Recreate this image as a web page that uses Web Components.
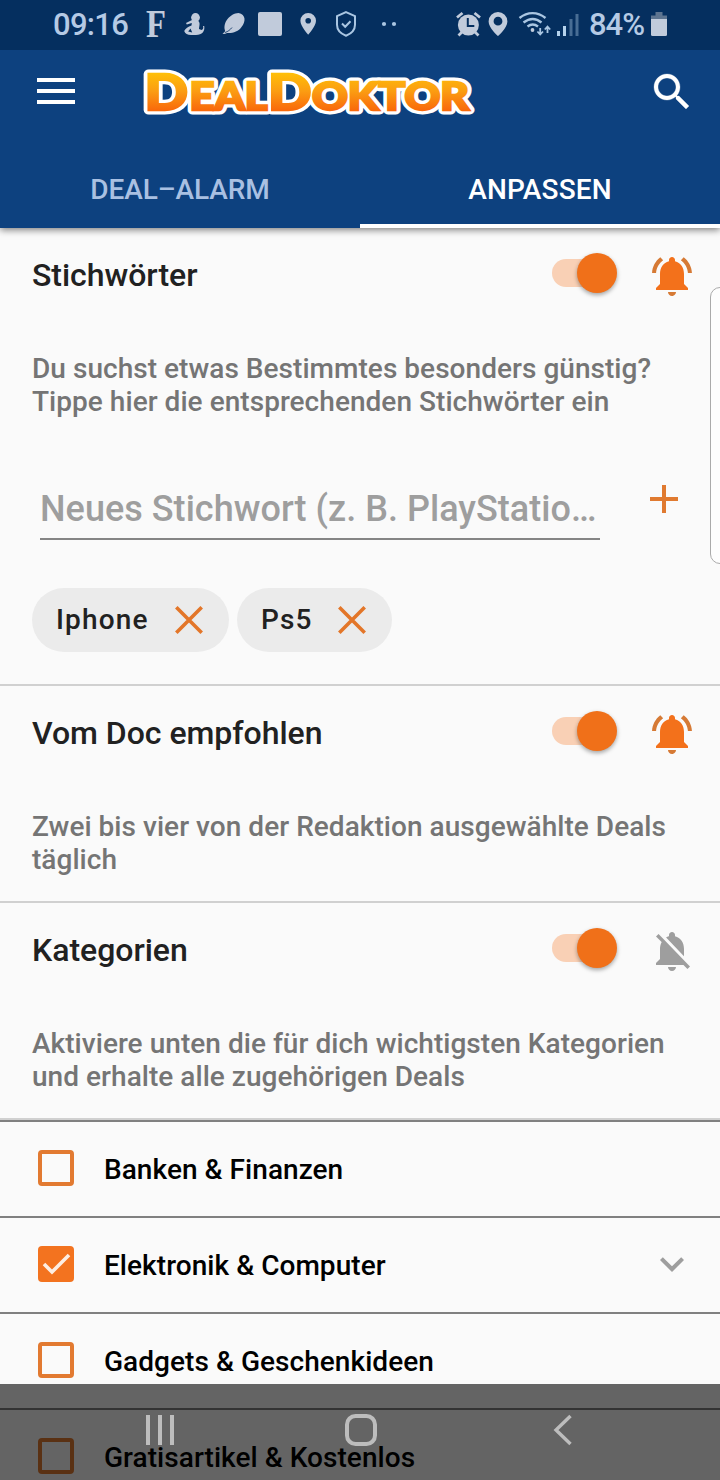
<!DOCTYPE html>
<html lang="de">
<head>
<meta charset="utf-8">
<title>DealDoktor – Anpassen</title>
<style>
html,body{margin:0;padding:0;background:#fafafa}
body{width:720px;height:1480px;overflow:hidden;font-family:Roboto,"Liberation Sans",sans-serif;font-weight:500}
</style>
</head>
<body>
<deal-app></deal-app>
<script>
const define = (name, html) => customElements.define(name, class extends HTMLElement {
  constructor() {
    super();
    const t = document.createElement('template');
    t.innerHTML = html;
    this.attachShadow({mode: 'open'}).append(t.content.cloneNode(true));
  }
});

define('status-bar', `
<style>
:host{display:grid;height:50px;background:#052f5f;color:#b5cae5;align-items:center;
grid-template-columns:53px 89px 30px 40px 40px 38px 36px 40px 74px 46px 27px 41px 33px 60px 73px}
svg{display:block;width:100%;height:50px;fill:#c1cbdb;overflow:visible}
span{font-size:31px;line-height:50px;white-space:nowrap;font-weight:500}
.t{letter-spacing:-.7px}.p{letter-spacing:-1px;padding-left:2px}
</style>
<i></i><span class="t">09:16</span>
<svg viewBox="142 0 30 50"><text x="146" y="37" font-family="Liberation Serif,serif" font-weight="700" font-size="39" textLength="20" lengthAdjust="spacingAndGlyphs">F</text></svg>
<svg viewBox="172 0 40 50"><circle cx="195.500" cy="17.500" r="4.400"/><path d="M192 20c4-1 7 0 7.500 3 .3 2-.5 4-.5 6l2.500 1c1.500-.5 2.200-2 1.500-4h1.200c1 5-2 9-8.200 9h-5c-3.500 0-6-1.500-6.800-4 1.300-2.500 3.800-4.500 7.300-5.500l.3-2.500-5 1.500-.8-1.500 4-2z"/><path d="M190.500 28.500l-2.300 3 4 1z" fill="#052f5f"/></svg>
<svg viewBox="212 0 40 50"><path d="M222.500 33.500c1.800-1 2.500-1.500 2.500-3-2.500-8 5-17 13.500-17.500 7.500 1.500 7.500 8.500 3 14-3 4.500-9 6.500-14.500 6-2 1-3.500 1.200-4.500.5z"/><path d="M225 32.500c3-1 5-2.500 7-5" fill="none" stroke="#052f5f" stroke-width=".8"/></svg>
<svg viewBox="252 0 38 50"><rect x="258" y="12" width="24" height="24" rx="2"/></svg>
<svg viewBox="290 0 36 50"><path fill-rule="evenodd" d="M308.200 13a7.800 7.800 0 0 1 7.800 7.800c0 5.500-7.800 14-7.800 14s-7.800-8.500-7.800-14a7.800 7.800 0 0 1 7.800-7.800zm0 5a2.800 2.800 0 1 0 0 5.600 2.800 2.800 0 0 0 0-5.600z"/></svg>
<svg viewBox="326 0 40 50"><path d="M346 12.200l9 4v8.500c0 5-4 9-9 11-5-2-9-6-9-11v-8.500z" fill="none" stroke="#aac6e2" stroke-width="2"/><path d="M342 23.500l3.200 3.200 5.300-5.500" fill="none" stroke="#aac6e2" stroke-width="2"/></svg>
<svg viewBox="366 0 74 50" style="fill:#aac6e2"><circle cx="384" cy="24" r="2.100"/><circle cx="394" cy="24" r="2.100"/></svg>
<svg viewBox="440 0 46 50"><circle cx="468.400" cy="25" r="10.500"/><path d="M457 17.500l5.500-4.500M480 17.500l-5.500-4.500M462 32l-3.500 3.500M475 32l3.500 3.500" stroke="#c1cbdb" stroke-width="2.800"/><path d="M467.800 18v8h6.500" fill="none" stroke="#052f5f" stroke-width="2"/></svg>
<svg viewBox="486 0 27 50"><path fill-rule="evenodd" d="M498 12a9.400 9.400 0 0 1 9.400 9.400c0 6.500-9.400 14.600-9.400 14.600s-9.400-8.100-9.400-14.600A9.400 9.400 0 0 1 498 12zm0 4.800a4.400 4.400 0 1 0 0 8.800 4.400 4.400 0 0 0 0-8.800z"/></svg>
<svg viewBox="513 0 41 50"><g fill="none" stroke="#aac6e2" stroke-width="2.400"><path d="M519.500 18c8-6.500 18-6.500 26 0M523.500 22.500c6-4.500 12.500-4.500 18 0M527.500 26.500c3.500-2.600 7-2.600 10.500 0"/></g><circle cx="532.500" cy="30" r="1.900"/><path d="M540.200 28v6M537.400 31.500l2.800 3 2.800-3M547.500 33v-6M544.800 29.500l2.700-3 2.700 3" fill="none" stroke="#aac6e2" stroke-width="1.800"/></svg>
<svg viewBox="554 0 33 50"><path d="M557 31h3v5h-3zM563 26h3v10h-3z" fill="#b5d2ec"/><path d="M569.500 19h3v17h-3zM575.500 14h3v22h-3z" fill="#486d94"/></svg>
<span class="p">84%</span>
<svg viewBox="647 0 73 50"><path d="M651 19v-3.500h4.500V12h7v3.500h4.500V19z" fill="#5d7490"/><path d="M651 19h16v15.500q0 1.500-1.500 1.500h-13q-1.500 0-1.500-1.500z"/></svg>`);

define('brand-logo', `
<style>:host{display:block;width:340px;height:60px}svg{display:block;overflow:visible}
text{font-family:Lato,sans-serif;font-weight:900}
.o{stroke:#fff;stroke-width:9;stroke-linejoin:round;fill:#fff}.f{fill:url(#g);stroke:url(#g);stroke-width:2.400}
</style>
<svg width="340" height="60" viewBox="140 60 340 60">
<defs><linearGradient id="g" gradientUnits="userSpaceOnUse" x1="0" y1="72" x2="0" y2="110"><stop offset="0" stop-color="#ffc107"/><stop offset=".5" stop-color="#fb9d12"/><stop offset="1" stop-color="#f96a0b"/></linearGradient>
<g id="w"><text x="144.500" y="110" font-size="50" textLength="43.500" lengthAdjust="spacingAndGlyphs">D</text><text x="189.500" y="110" font-size="38" textLength="78" lengthAdjust="spacingAndGlyphs">EAL</text><text x="268" y="110" font-size="50" textLength="43.500" lengthAdjust="spacingAndGlyphs">D</text><text x="312" y="110" font-size="38" textLength="157" lengthAdjust="spacingAndGlyphs">OKTOR</text></g></defs>
<use href="#w" class="o"/><use href="#w" class="f"/></svg>`);

define('app-bar', `
<style>:host{display:grid;grid-template-columns:37px 103px 1fr 72px;height:100px;background:#0d417f}
svg{display:block}.m{margin-top:28px}.s{margin-top:18px}brand-logo{margin-top:10px}</style>
<i></i><svg class="m" width="38" height="26" viewBox="0 0 38 26" fill="#fff"><path d="M0 0h38v4H0zM0 11h38v4H0zM0 22h38v4H0z"/></svg>
<brand-logo></brand-logo>
<svg class="s" width="48" height="48" viewBox="0 0 24 24" fill="#fff" stroke="#fff" stroke-width=".15"><path d="M15.500 14h-.79l-.28-.27C15.410 12.590 16 11.110 16 9.500 16 5.910 13.090 3 9.500 3S3 5.910 3 9.500 5.910 16 9.500 16c1.610 0 3.090-.59 4.230-1.570l.27.28v.79l5 4.990L20.490 19l-4.990-5zm-6 0C7.010 14 5 11.990 5 9.500S7.010 5 9.500 5 14 7.010 14 9.500 11.990 14 9.500 14z"/></svg>`);

define('tab-strip', `
<style>:host{display:grid;grid-template-columns:1fr 1fr;height:78px;background:#0d417f;position:relative;z-index:1;box-shadow:0 2px 7px rgba(0,0,0,.5);clip-path:inset(0 0 -14px 0);color:#a9c0e2}
div{box-sizing:border-box;text-align:center;font-size:28px;line-height:79px;height:78px;letter-spacing:-.1px}
.on{color:#fff;border-bottom:4px solid #fff;letter-spacing:.15px}</style>
<div>DEAL–ALARM</div><div class="on">ANPASSEN</div>`);

define('toggle-switch', `
<style>:host{display:flex;align-items:center;width:65px;height:40px}
i{width:56px;height:28px;border-radius:14px;background:#f9d0b5}
b{width:40px;height:40px;border-radius:50%;background:#f07019;margin-left:-31px;box-shadow:0 2px 4px rgba(0,0,0,.35)}</style><i></i><b></b>`);

define('bell-on', `<style>:host{display:block}svg{display:block}</style><svg width="48" height="48" viewBox="0 0 24 24" fill="#d67a35"><path d="M7.580 4.080L6.150 2.650C3.750 4.480 2.170 7.300 2.030 10.500h2c.15-2.650 1.510-4.970 3.550-6.420zm12.390 6.420h2c-.15-3.200-1.730-6.020-4.120-7.850l-1.420 1.430c2.020 1.450 3.390 3.770 3.540 6.420zM12 22c.14 0 .27-.01.4-.04.65-.14 1.180-.58 1.440-1.180.1-.24.15-.5.15-.78h-4c.01 1.100.9 2 2.010 2z"/><path fill="#f3711b" d="M18 11c0-3.070-1.640-5.640-4.500-6.320V4c0-.83-.67-1.500-1.500-1.500s-1.500.67-1.500 1.500v.68C7.630 5.360 6 7.920 6 11v5l-2 2v1h16v-1l-2-2v-5z"/></svg>`);
define('bell-off', `<style>:host{display:block}svg{display:block}</style><svg width="48" height="48" viewBox="0 0 24 24" fill="#9e9e9e"><path d="M20 18.690L7.840 6.140 5.270 3.490 4 4.760l2.800 2.800v.01c-.52.99-.8 2.160-.8 3.420v5l-2 2v1h13.730l2 2L21 19.720l-1-1.030zM12 22c1.110 0 2-.89 2-2h-4c0 1.110.89 2 2 2zm6-7.320V11c0-3.080-1.640-5.640-4.500-6.320V4c0-.83-.67-1.500-1.500-1.500s-1.500.67-1.500 1.500v.68c-.15.03-.29.08-.42.12-.1.03-.2.07-.3.110h-.01c-.01 0-.01 0-.02.01-.23.09-.46.2-.68.31 0 0-.01 0-.01.01L18 14.680z"/></svg>`);

define('settings-section', `
<style>:host{display:block;box-sizing:border-box;border-bottom:2px solid #d0d0d0;padding-bottom:25px}
header{display:grid;grid-template-columns:1fr 65px 48px;column-gap:31px;padding:0 24px 0 32px;height:124px;align-items:start}
h2{margin:0;font-size:32px;line-height:40px;padding-top:27px;font-weight:500;letter-spacing:-.03px;color:#212121}
toggle-switch{margin-top:25px}slot[name=bell]{display:block;margin-top:24px}
.d{display:block;padding-left:32px;font-size:28px;line-height:33px;letter-spacing:.04px;color:#757575;white-space:nowrap}</style>
<header><h2><slot name="title"></slot></h2><toggle-switch></toggle-switch><slot name="bell"></slot></header>
<div class="d"><slot name="desc"></slot></div><slot></slot>`);

define('keyword-field', `
<style>:host{display:grid;grid-template-columns:560px 48px;column-gap:48px;padding:58px 0 0 40px;align-items:start}
div{height:64px;box-sizing:border-box;border-bottom:2px solid #858585;font-size:36px;letter-spacing:.03px;line-height:66px;color:#9e9e9e;white-space:nowrap}
svg{display:block;width:28px;height:28px;margin:9px 0 0 2px}</style>
<div>Neues Stichwort (z. B. PlayStatio…</div>
<svg viewBox="0 0 28 28" fill="#e07a30"><path d="M12 0h4v12h12v4H16v12h-4V16H0v-4h12z"/></svg>`);

define('keyword-chip', `
<style>:host{display:flex;box-sizing:border-box;height:64px;border-radius:32px;background:#ebebeb;align-items:center;padding:0 26px 0 24px;justify-content:space-between;font-size:28px;color:#212121;letter-spacing:1.150px}
span{padding-bottom:2px}svg{display:block}</style><span><slot></slot></span>
<svg width="28" height="28" viewBox="0 0 28 28" stroke="#e37629" stroke-width="3.600"><path d="M1.300 1.300l25.400 25.400M26.700 1.300L1.300 26.700"/></svg>`);

define('chip-row', `<style>:host{display:flex;gap:8px;padding:48px 0 7px 32px}</style><slot></slot>`);

define('category-row', `
<style>:host{display:grid;box-sizing:border-box;height:96px;grid-template-columns:36px 1fr 48px;column-gap:30px;padding:0 24px 2px 38px;align-items:center;border-bottom:2px solid #808080;font-size:28px;color:#000}
i{box-sizing:border-box;width:36px;height:36px;border:4px solid #e27a31;border-radius:4px}
svg{display:none}:host([checked]) i{display:none}:host([checked]) svg{display:block}span{padding-top:2px;letter-spacing:.05px}</style>
<i></i><svg width="36" height="36" viewBox="0 0 36 36"><rect width="36" height="36" rx="4" fill="#f3731f"/><path d="M6 18l8 8L31 9" fill="none" stroke="#fdeee3" stroke-width="3.600"/></svg>
<span><slot></slot></span>
<svg width="48" height="48" viewBox="0 0 24 24" fill="#9e9e9e"><path d="M16.590 8.590L12 13.170 7.410 8.590 6 10l6 6 6-6z"/></svg>`);

define('nav-bar', `
<style>:host{display:block;position:absolute;left:0;top:1384px;width:720px;height:96px;background:rgba(0,0,0,.6)}
nav{display:flex;height:92px;align-items:center;padding-left:145px}svg{display:block;fill:none;stroke:#bdbdbd;stroke-width:4}</style>
<nav><svg width="30" height="32" viewBox="0 0 30 32"><path d="M3 1v30M15 1v30M27 1v30"/></svg>
<svg width="32" height="32" viewBox="0 0 32 32" style="margin-left:170px"><rect x="2" y="2" width="28" height="28" rx="8.500"/></svg>
<svg width="20" height="32" viewBox="0 0 20 32" style="margin-left:176px"><path d="M17.500 2L3 16l14.500 14" stroke-width="3.400"/></svg></nav>`);

define('edge-handle', `<style>:host{display:block;position:absolute;box-sizing:border-box;left:710px;top:287px;width:20px;height:277px;border:1px solid #aaa;border-radius:12px;background:#fdfdfd}</style>`);

define('deal-app', `
<style>:host{display:block;position:relative;width:720px;height:1480px;overflow:hidden;background:#fafafa}
main{display:block}.list{border-top:2px solid #808080}</style>
<status-bar></status-bar><app-bar></app-bar><tab-strip></tab-strip>
<main>
<settings-section><span slot="title">Stichwörter</span><bell-on slot="bell"></bell-on><span slot="desc">Du suchst etwas Bestimmtes besonders günstig?<br>Tippe hier die entsprechenden Stichwörter ein</span>
<keyword-field></keyword-field>
<chip-row><keyword-chip style="width:197px">Iphone</keyword-chip><keyword-chip style="width:155px">Ps5</keyword-chip></chip-row></settings-section>
<settings-section><span slot="title">Vom Doc empfohlen</span><bell-on slot="bell"></bell-on><span slot="desc">Zwei bis vier von der Redaktion ausgewählte Deals<br>täglich</span></settings-section>
<settings-section><span slot="title">Kategorien</span><bell-off slot="bell"></bell-off><span slot="desc">Aktiviere unten die für dich wichtigsten Kategorien<br>und erhalte alle zugehörigen Deals</span></settings-section>
<div class="list"><category-row>Banken &amp; Finanzen</category-row><category-row checked>Elektronik &amp; Computer</category-row><category-row>Gadgets &amp; Geschenkideen</category-row><category-row>Gratisartikel &amp; Kostenlos</category-row></div>
</main>
<edge-handle></edge-handle><nav-bar></nav-bar>`);
</script>
</body>
</html>
